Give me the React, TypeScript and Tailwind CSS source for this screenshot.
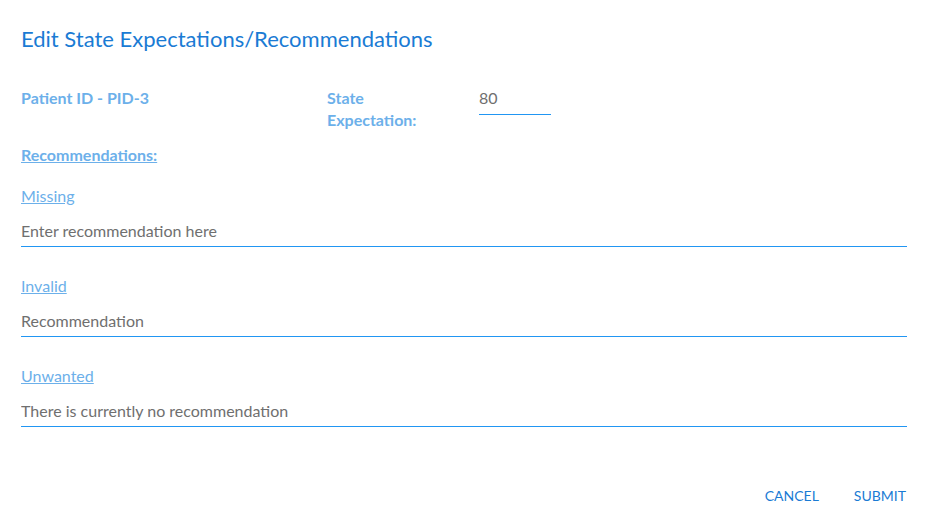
import React from "react";

const groups = [
  { label: "Missing", value: "Enter recommendation here" },
  { label: "Invalid", value: "Recommendation" },
  { label: "Unwanted", value: "There is currently no recommendation" },
];

export default function App() {
  return (
    <div className="w-[928px] h-[518px] bg-white font-['Lato','Liberation_Sans',sans-serif] px-[21px] pt-[25px] flex flex-col">
      <h1 className="text-[22px] leading-[28px] text-[#1a7bd4]">Edit State Expectations/Recommendations</h1>

      <div className="mt-[34px] flex">
        <div className="w-[306px] text-[16px] leading-[22px] font-bold text-[#6cb0ea]">Patient ID - PID-3</div>
        <div className="w-[152px] text-[16px] leading-[22px] font-bold text-[#6cb0ea]">
          State
          <br />
          Expectation:
        </div>
        <input
          defaultValue="80"
          className="w-[72px] h-[28px] pb-[6px] border-b border-solid border-[#2196f3] bg-transparent outline-none text-[16px] leading-[22px] text-[#6f6f6f]"
        />
      </div>

      <div className="mt-[13px] text-[16px] leading-[22px] font-bold text-[#6cb0ea] underline">Recommendations:</div>

      <div className="flex flex-col">
        {groups.map((g, i) => (
          <div key={g.label} className={(i === 0 ? "mt-[19px]" : "mt-[28px]") + " flex flex-col"}>
            <a className="text-[16px] leading-[22px] text-[#6cb0ea] underline w-fit">{g.label}</a>
            <input
              defaultValue={g.value}
              className="mt-[13px] w-full h-[27px] pb-[5px] border-b border-solid border-[#2196f3] bg-transparent outline-none text-[16px] leading-[22px] text-[#6f6f6f]"
            />
          </div>
        ))}
      </div>

      <div className="mt-auto mb-[11px] mr-[1px] flex justify-end gap-[35px] text-[14px] leading-[22px] text-[#1a7bd4]">
        <button className="uppercase">Cancel</button>
        <button className="uppercase">Submit</button>
      </div>
    </div>
  );
}
